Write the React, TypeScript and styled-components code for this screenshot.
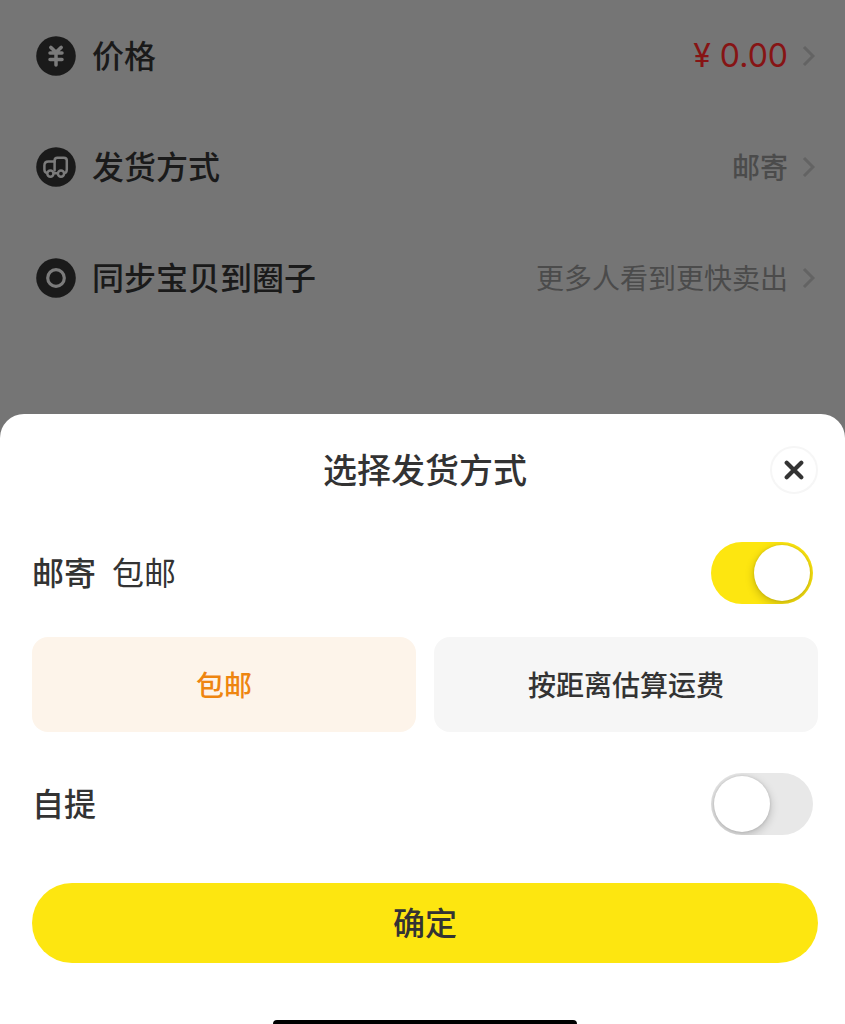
import { useState, type ReactNode } from "react";
import styled, { createGlobalStyle } from "styled-components";

const GlobalStyle = createGlobalStyle`
  *, *::before, *::after { box-sizing: border-box; }
  body {
    margin: 0;
    background: #757575;
    font-family: "Noto Sans CJK SC", "Noto Sans", sans-serif;
    color: #333333;
  }
  button { font-family: inherit; color: inherit; cursor: pointer; }
`;

const Screen = styled.div`
  min-height: 100vh;
  display: flex;
  flex-direction: column;
  justify-content: space-between;
`;

const SettingList = styled.ul`
  list-style: none;
  margin: 0;
  padding: 0;
`;

const SettingRow = styled.button`
  width: 100%;
  height: 111px;
  padding: 0 30px 0 36px;
  border: 0;
  background: none;
  display: flex;
  align-items: center;
  text-align: left;
`;

const SettingName = styled.span`
  flex: 1;
  margin-left: 16px;
  padding-bottom: 4px;
  font-size: 32px;
  line-height: 40px;
  font-weight: 500;
  color: #1a1a1a;
`;

const SettingValue = styled.span<{ $strong?: boolean }>`
  margin-right: 14px;
  padding-bottom: 2px;
  font-size: 28px;
  line-height: 40px;
  font-weight: ${(p) => (p.$strong ? 500 : 400)};
  color: #4b4b4b;
`;

const Price = styled(SettingValue)`
  padding-bottom: 0;
  font-family: Inter, "Noto Sans CJK SC", sans-serif;
  font-size: 32px;
  color: #861414;
`;

const Sheet = styled.section`
  padding: 32px 27px 0 32px;
  border-radius: 24px 24px 0 0;
  background: #ffffff;
`;

const SheetHeader = styled.header`
  display: grid;
  grid-template-columns: 48px 1fr 48px;
  align-items: center;
  margin-bottom: 48px;
`;

const SheetTitle = styled.h2`
  grid-column: 2;
  margin: 0;
  padding-bottom: 2px;
  text-align: center;
  font-size: 34px;
  line-height: 46px;
  font-weight: 500;
`;

const CloseButton = styled.button`
  width: 48px;
  height: 48px;
  padding: 0;
  border: 2px solid #f6f6f6;
  border-radius: 50%;
  background: #ffffff;
  display: grid;
  place-items: center;
`;

const ToggleRow = styled.div`
  display: flex;
  align-items: center;
  justify-content: space-between;
  padding-right: 5px;
`;

const ToggleLabel = styled.label`
  display: flex;
  gap: 16px;
  padding-bottom: 4px;
  font-size: 32px;
  line-height: 40px;
  font-weight: 500;
`;

const ToggleNote = styled.span`
  font-weight: 400;
`;

const Toggle = styled.input`
  appearance: none;
  width: 102px;
  height: 62px;
  margin: 0;
  padding: 3px;
  border-radius: 31px;
  background: #e8e8e8;
  overflow: hidden;
  display: grid;
  align-items: center;
  justify-content: start;
  cursor: pointer;

  &::before {
    content: "";
    width: 56px;
    height: 56px;
    border-radius: 50%;
    background: #ffffff;
    box-shadow: 0 3px 10px rgba(0, 0, 0, 0.22), 0 0 3px rgba(0, 0, 0, 0.12);
  }

  &:checked {
    background: #fde610;
    justify-content: end;
  }
`;

const Options = styled.div`
  display: grid;
  grid-template-columns: 1fr 1fr;
  gap: 18px;
  margin: 33px 0 41px;
`;

const Option = styled.button<{ $active: boolean }>`
  height: 95px;
  padding: 0 0 2px;
  border: 0;
  border-radius: 16px;
  font-size: 28px;
  line-height: 40px;
  font-weight: 500;
  background: ${(p) => (p.$active ? "#fdf4ea" : "#f6f6f6")};
  color: ${(p) => (p.$active ? "#ee8510" : "#333333")};
`;

const ConfirmButton = styled.button`
  display: block;
  width: 100%;
  height: 80px;
  margin: 48px 0 57px;
  padding: 0 0 4px;
  border: 0;
  border-radius: 40px;
  background: #fde610;
  font-size: 32px;
  line-height: 40px;
  font-weight: 500;
`;

const HomeIndicator = styled.div`
  width: 304px;
  max-width: 40%;
  height: 4px;
  margin: 0 auto;
  border-radius: 4px 4px 0 0;
  background: #000000;
`;

const Badge = ({ children }: { children: ReactNode }) => (
  <svg width="40" height="40" viewBox="0 0 40 40" fill="none" aria-hidden="true">
    <circle cx="20" cy="20" r="19.8" fill="#1a1a1a" />
    {children}
  </svg>
);

const YenIcon = () => (
  <Badge>
    <path
      d="M14.8 11.4L20 16.2L25.2 11.4M14 17H26M14 23.4H26M20 17V29"
      stroke="#7b7b7b"
      strokeWidth="3.5"
      strokeLinecap="round"
      strokeLinejoin="round"
    />
  </Badge>
);

const TruckIcon = () => (
  <Badge>
    <g stroke="#7b7b7b" strokeWidth="2.5" strokeLinecap="round" strokeLinejoin="round">
      <path d="M10.8 26C9.2 25.6 8.4 24.4 8.4 22.6V18.6C8.4 16 9.8 14.6 12.4 14.6H18.6" />
      <path d="M18.6 23.4V13.6C18.6 11.8 19.6 10.8 21.4 10.8H27.8C29.8 10.8 30.8 11.8 30.8 13.6V22.4C30.8 24.4 30.2 25.6 28.6 26" />
      <path d="M18 26.2H21.2" />
      <circle cx="14.4" cy="26.6" r="3.1" />
      <circle cx="25" cy="26.6" r="3.1" />
    </g>
  </Badge>
);

const CircleIcon = () => (
  <Badge>
    <circle cx="20" cy="20" r="8.3" stroke="#7b7b7b" strokeWidth="3.2" />
  </Badge>
);

const Chevron = () => (
  <svg width="13" height="22" viewBox="0 0 13 22" fill="none" aria-hidden="true">
    <path d="M2 2L11 11L2 20" stroke="#636363" strokeWidth="3" />
  </svg>
);

const CloseIcon = () => (
  <svg width="20" height="20" viewBox="0 0 20 20" fill="none" aria-hidden="true">
    <path d="M2.7 2.7L17.3 17.3M17.3 2.7L2.7 17.3" stroke="#333333" strokeWidth="4.2" strokeLinecap="round" />
  </svg>
);

const fees = ["包邮", "按距离估算运费"];

export default function App() {
  const [fee, setFee] = useState(fees[0]);
  const [mail, setMail] = useState(true);
  const [pickup, setPickup] = useState(false);

  return (
    <>
      <GlobalStyle />
      <Screen>
        <SettingList>
          <li>
            <SettingRow type="button">
              <YenIcon />
              <SettingName>价格</SettingName>
              <Price>¥ 0.00</Price>
              <Chevron />
            </SettingRow>
          </li>
          <li>
            <SettingRow type="button">
              <TruckIcon />
              <SettingName>发货方式</SettingName>
              <SettingValue $strong>邮寄</SettingValue>
              <Chevron />
            </SettingRow>
          </li>
          <li>
            <SettingRow type="button">
              <CircleIcon />
              <SettingName>同步宝贝到圈子</SettingName>
              <SettingValue>更多人看到更快卖出</SettingValue>
              <Chevron />
            </SettingRow>
          </li>
        </SettingList>

        <Sheet role="dialog" aria-labelledby="sheet-title">
          <SheetHeader>
            <SheetTitle id="sheet-title">选择发货方式</SheetTitle>
            <CloseButton type="button" aria-label="关闭">
              <CloseIcon />
            </CloseButton>
          </SheetHeader>

          <ToggleRow>
            <ToggleLabel htmlFor="mail">
              邮寄 <ToggleNote>{fee}</ToggleNote>
            </ToggleLabel>
            <Toggle
              id="mail"
              type="checkbox"
              role="switch"
              checked={mail}
              onChange={(e) => setMail(e.target.checked)}
            />
          </ToggleRow>

          <Options>
            {fees.map((name) => (
              <Option
                key={name}
                type="button"
                $active={name === fee}
                aria-pressed={name === fee}
                onClick={() => setFee(name)}
              >
                {name}
              </Option>
            ))}
          </Options>

          <ToggleRow>
            <ToggleLabel htmlFor="pickup">自提</ToggleLabel>
            <Toggle
              id="pickup"
              type="checkbox"
              role="switch"
              checked={pickup}
              onChange={(e) => setPickup(e.target.checked)}
            />
          </ToggleRow>

          <ConfirmButton type="button">确定</ConfirmButton>
          <HomeIndicator />
        </Sheet>
      </Screen>
    </>
  );
}
